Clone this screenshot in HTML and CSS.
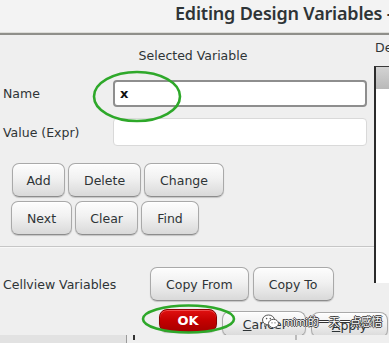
FILE: index.html
```html
<!DOCTYPE html>
<html lang="en">
<head>
    <meta charset="UTF-8">
    <meta name="viewport" content="width=device-width, initial-scale=1.0">
    <title>Editing Design Variables</title>
    <link rel="stylesheet" href="styles.css">
</head>
<body>
    <div class="screen">
        <div class="window">
            <div class="titlebar">
                <span class="title">Editing Design Variables - </span>
            </div>
            <div class="content">
                <div class="left">
                    <div class="heading">Selected Variable</div>
                    <div class="field">
                        <label for="varName">Name</label>
                        <input id="varName" class="input input-focus" type="text" value="x">
                    </div>
                    <div class="field">
                        <label for="varValue">Value (Expr)</label>
                        <input id="varValue" class="input" type="text" value="">
                    </div>
                    <div class="btn-row first">
                        <button class="btn btn-add">Add</button>
                        <button class="btn">Delete</button>
                        <button class="btn">Change</button>
                    </div>
                    <div class="btn-row">
                        <button class="btn">Next</button>
                        <button class="btn btn-clear">Clear</button>
                        <button class="btn">Find</button>
                    </div>
                    <div class="separator"></div>
                    <div class="cellview">
                        <span class="cellview-label">Cellview Variables</span>
                        <button class="btn">Copy From</button>
                        <button class="btn">Copy To</button>
                    </div>
                </div>
                <div class="right">
                    <div class="right-label">Design Variables</div>
                    <div class="var-table">
                        <div class="var-table-head"></div>
                    </div>
                </div>
            </div>
            <div class="actions">
                <button class="btn btn-small btn-ok">OK</button>
                <button class="btn btn-small btn-cancel"><u>C</u>ancel</button>
                <button class="btn btn-small btn-apply"><u>A</u>pply</button>
            </div>
        </div>
        <div class="desk">
            <div class="desk-left"></div>
            <div class="desk-right">
                <span class="tick"></span>
                <span class="tick tick-faint"></span>
            </div>
        </div>

        <!-- green annotation rings -->
        <svg class="ring ring-name" width="90" height="53" viewBox="0 0 90 53">
            <ellipse cx="45" cy="26.5" rx="43" ry="24.5" fill="none" stroke="#2ea82a" stroke-width="2.6"/>
        </svg>
        <svg class="ring ring-ok" width="95" height="32" viewBox="0 0 95 32">
            <ellipse cx="47.5" cy="16" rx="45.5" ry="13.5" fill="none" stroke="#2ea82a" stroke-width="2.6"/>
        </svg>

        <div class="watermark">
            <svg width="17" height="15" viewBox="0 0 17 15">
                <ellipse cx="6.5" cy="6" rx="6" ry="5" fill="#fff" stroke="#555" stroke-width="1"/>
                <path d="M3 10 L2.5 12.5 L5.5 10.8 Z" fill="#fff" stroke="#555" stroke-width="0.8"/>
                <ellipse cx="11.5" cy="9.5" rx="5" ry="4.2" fill="#fff" stroke="#555" stroke-width="1"/>
                <path d="M14 13 L15 14.6 L12.6 13.5 Z" fill="#fff" stroke="#555" stroke-width="0.8"/>
                <circle cx="4.6" cy="4.6" r="0.8" fill="#555"/>
                <circle cx="8.3" cy="4.6" r="0.8" fill="#555"/>
                <circle cx="10" cy="8.8" r="0.6" fill="#555"/>
                <circle cx="13" cy="8.8" r="0.6" fill="#555"/>
            </svg>
            <span>mimi的一天一点感悟</span>
        </div>
    </div>
</body>
</html>
```

FILE: styles.css
```css
body {
    margin: 0;
    padding: 0;
    font-family: "DejaVu Sans", sans-serif;
    color: #2e3436;
    background-color: #e6e6e6;
}

.screen {
    position: relative;
    width: 389px;
    height: 343px;
    overflow: hidden;
}

.window {
    height: 335px;
    background-color: #efefef;
    overflow: hidden;
    box-shadow: 0 1px 2px rgba(0, 0, 0, 0.35);
}

.titlebar {
    height: 33px;
    background-color: #f3f3f3;
    border-bottom: 2px solid #8f8f8a;
    box-shadow: inset 0 -1px 0 #dcdcd8;
    white-space: nowrap;
    overflow: hidden;
}

.title {
    display: block;
    padding-left: 175px;
    font-family: "Noto Sans", sans-serif;
    font-weight: 600;
    font-size: 18px;
    line-height: 26px;
    letter-spacing: -0.2px;
    color: #2e3436;
}

.content {
    display: flex;
}

.left {
    width: 374px;
    flex-shrink: 0;
}

.heading {
    margin-top: 13px;
    padding-left: 12px;
    line-height: 16px;
    font-size: 12.5px;
    text-align: center;
}

.field {
    display: flex;
    align-items: center;
    margin-top: 16px;
}

.field + .field {
    margin-top: 11px;
}

.field label {
    width: 110px;
    padding-left: 3px;
    font-size: 12.5px;
}

.input {
    box-sizing: border-box;
    width: 254px;
    height: 27px;
    margin: 0;
    padding: 0 5px;
    border: 1px solid #d9d9d9;
    border-radius: 4px;
    background-color: #fff;
    font-family: "DejaVu Sans", sans-serif;
    font-size: 13px;
    font-weight: bold;
    color: #111;
    outline: none;
}

.input-focus {
    border: 2px solid #8e8e8e;
}

.field + .field .input {
    height: 28px;
}

.btn-row {
    display: flex;
    gap: 3px;
    margin-top: 4px;
    padding-left: 11px;
}

.btn-row.first {
    margin-top: 17px;
    padding-left: 12px;
}

.btn {
    box-sizing: border-box;
    height: 34px;
    padding: 0 15px;
    border: 1px solid #a9a9a9;
    border-bottom-color: #8c8c8c;
    border-radius: 7px;
    background: linear-gradient(#fdfdfd, #f1f1f1 45%, #d9d9d9);
    box-shadow: inset 0 1px 0 #fff, 0 1px 1px rgba(0, 0, 0, 0.18);
    font-family: "DejaVu Sans", sans-serif;
    font-size: 12.5px;
    color: #2e3436;
    cursor: pointer;
}

.btn-add {
    width: 53px;
    padding: 0;
}

.btn-clear {
    width: 63px;
    padding: 0;
}

.separator {
    margin-top: 11px;
    height: 1px;
    background-color: #c6c6c6;
    border-bottom: 1px solid #f8f8f8;
}

.cellview {
    display: flex;
    align-items: center;
    gap: 4px;
    margin-top: 19px;
}

.cellview-label {
    width: 143px;
    padding-left: 3px;
    font-size: 12.5px;
}

.right {
    flex: 1;
    overflow: hidden;
    white-space: nowrap;
}

.right-label {
    margin-top: 5px;
    padding-left: 1px;
    line-height: 16px;
    font-size: 12.5px;
}

.var-table {
    height: 216px;
    margin-top: 10px;
    border-left: 2px solid #2b2b2b;
    border-top: 1px solid #3a3a3a;
    background-color: #fff;
}

.var-table-head {
    height: 22px;
    background: linear-gradient(#d3d3d3, #b9b9b9);
}

.actions {
    display: flex;
    gap: 5px;
    margin-top: 8px;
    padding-left: 159px;
}

.btn-small {
    height: 26px;
    padding: 0;
    border-radius: 8px;
}

.btn-ok {
    width: 58px;
    height: 23px;
    border-color: #8a0000;
    background: linear-gradient(#e01010, #c40000 50%, #a80000);
    box-shadow: inset 0 1px 0 #f04a4a, 0 1px 1px rgba(0, 0, 0, 0.25);
    color: #fff;
    font-weight: bold;
    font-size: 13px;
}

.btn-cancel {
    width: 84px;
    margin-top: 2px;
}

.btn-apply {
    width: 77px;
    margin-top: 3px;
}

.desk {
    display: flex;
    height: 8px;
}

.desk-left {
    width: 126px;
    background-color: #e2e2e2;
    border-right: 1px solid #9a9a9a;
}

.desk-right {
    flex: 1;
    display: flex;
    gap: 160px;
    padding-left: 6px;
    background-color: #efefef;
}

.tick {
    width: 2px;
    height: 5px;
    background-color: #333;
}

.tick-faint {
    background-color: #bbb;
}

.ring {
    position: absolute;
}

.ring-name {
    left: 92px;
    top: 70px;
}

.ring-ok {
    left: 141px;
    top: 303px;
}

.watermark {
    position: absolute;
    left: 262px;
    top: 313px;
    display: flex;
    align-items: center;
    gap: 4px;
    font-family: "Noto Sans", "Noto Sans CJK SC", sans-serif;
    font-size: 11px;
    letter-spacing: -0.4px;
    color: #fff;
    text-shadow: 1px 0 0 #333, -1px 0 0 #333, 0 1px 0 #333, 0 -1px 0 #333;
    white-space: nowrap;
}
```
